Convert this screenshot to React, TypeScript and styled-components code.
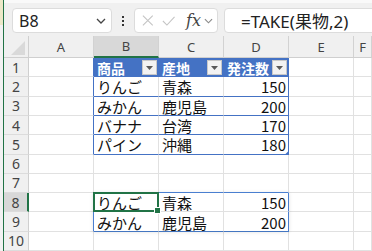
import styled, { createGlobalStyle } from "styled-components"

const GlobalStyle = createGlobalStyle`
    html, body {
        margin: 0;
        padding: 0;
        overflow: hidden;
        background: #ffffff;
    }
`

type Kind = "plain" | "th" | "num"

interface CellData {
    text: string
    kind: Kind
}

const COLS = ["A", "B", "C", "D", "E", "F"]
const ROWS = 10
const TABLE_BLUE = "#4472c4"
const SPILL_BLUE = "#4a7fd0"
const GRID = "#e1e1e1"

const data: Record<string, CellData> = {
    B1: { text: "商品", kind: "th" },
    C1: { text: "産地", kind: "th" },
    D1: { text: "発注数", kind: "th" },
    B2: { text: "りんご", kind: "plain" },
    C2: { text: "青森", kind: "plain" },
    D2: { text: "150", kind: "num" },
    B3: { text: "みかん", kind: "plain" },
    C3: { text: "鹿児島", kind: "plain" },
    D3: { text: "200", kind: "num" },
    B4: { text: "バナナ", kind: "plain" },
    C4: { text: "台湾", kind: "plain" },
    D4: { text: "170", kind: "num" },
    B5: { text: "パイン", kind: "plain" },
    C5: { text: "沖縄", kind: "plain" },
    D5: { text: "180", kind: "num" },
    B8: { text: "りんご", kind: "plain" },
    C8: { text: "青森", kind: "plain" },
    D8: { text: "150", kind: "num" },
    B9: { text: "みかん", kind: "plain" },
    C9: { text: "鹿児島", kind: "plain" },
    D9: { text: "200", kind: "num" },
}

const inTable = (c: number, r: number) => c >= 1 && c <= 3 && r >= 1 && r <= 5

// border colours for the right and bottom edge of a cell
const edges = (c: number, r: number) => {
    let right = GRID
    let bottom = GRID
    if (inTable(c, r)) bottom = TABLE_BLUE
    if (r === 1 && inTable(c, r)) right = TABLE_BLUE
    if ((c === 0 || c === 3) && r >= 1 && r <= 5) right = TABLE_BLUE
    if (c >= 1 && c <= 3 && (r === 7 || r === 9)) bottom = SPILL_BLUE
    if ((c === 0 || c === 3) && (r === 8 || r === 9)) right = SPILL_BLUE
    return { right, bottom }
}

const XIcon = () => (
    <svg width="13" height="13" viewBox="0 0 13 13">
        <path d="M1 1 L12 12 M12 1 L1 12" stroke="#c4c4c4" strokeWidth="1.2" fill="none" />
    </svg>
)

const CheckIcon = () => (
    <svg width="15" height="12" viewBox="0 0 15 12">
        <path d="M1 6 L5.5 10.5 L14 1.5" stroke="#c4c4c4" strokeWidth="1.2" fill="none" />
    </svg>
)

const Chevron = ({ color }: { color: string }) => (
    <svg width="10" height="6" viewBox="0 0 10 6">
        <path d="M1 1 L5 5 L9 1" stroke={color} strokeWidth="1.3" fill="none" />
    </svg>
)

const FilterButton = () => (
    <Filter>
        <svg width="7" height="4" viewBox="0 0 7 4">
            <path d="M0 0 L7 0 L3.5 4 Z" fill="#595959" />
        </svg>
    </Filter>
)

const App = () => {
    const cells = []
    cells.push(<Corner key="corner"><CornerTriangle /></Corner>)
    COLS.forEach((col, i) => {
        cells.push(
            <ColHeader key={`h${col}`} $selected={i === 1}>
                {col}
            </ColHeader>
        )
    })
    for (let r = 1; r <= ROWS; r++) {
        cells.push(
            <RowHeader key={`r${r}`} $selected={r === 8}>
                {r}
            </RowHeader>
        )
        COLS.forEach((col, c) => {
            const cell = data[`${col}${r}`]
            const { right, bottom } = edges(c, r)
            const active = c === 1 && r === 8
            cells.push(
                <Cell
                    key={`${col}${r}`}
                    $right={right}
                    $bottom={bottom}
                    $kind={cell ? cell.kind : "plain"}
                >
                    {cell && <CellText>{cell.text}</CellText>}
                    {cell && cell.kind === "th" && <FilterButton />}
                    {c === 3 && r === 5 && <ResizeHandle />}
                    {active && <SpillShadow />}
                    {active && (
                        <Selection>
                            <FillHandle />
                        </Selection>
                    )}
                </Cell>
            )
        })
    }

    return (
        <>
            <GlobalStyle />
            <Window>
                <EdgeStrip />
                <Main>
                    <FormulaBar>
                        <NameBox>
                            <span>B8</span>
                            <Chevron color="#444" />
                        </NameBox>
                        <Kebab>
                            <Dot />
                            <Dot />
                            <Dot />
                        </Kebab>
                        <ActionBox>
                            <XIcon />
                            <CheckIcon />
                            <Fx>fx</Fx>
                            <Chevron color="#8a8a8a" />
                        </ActionBox>
                        <FormulaInput>=TAKE(果物,2)</FormulaInput>
                    </FormulaBar>
                    <Sheet>{cells}</Sheet>
                </Main>
            </Window>
        </>
    )
}

export default App

const Window = styled.div`
    display: flex;
    width: 372px;
    height: 251px;
    overflow: hidden;
    font-family: "Noto Sans", "Noto Sans CJK JP", sans-serif;
`

const EdgeStrip = styled.div`
    width: 3px;
    flex-shrink: 0;
    background: linear-gradient(#ece8c8 0, #ece8c8 25px, #f2f2f2 25px);
    border-right: 1px solid #217346;
`

const Main = styled.div`
    flex: 1;
    display: flex;
    flex-direction: column;
    min-width: 0;
`

const FormulaBar = styled.div`
    height: 38px;
    box-sizing: border-box;
    display: flex;
    align-items: flex-start;
    padding: 5px 0 0 8px;
    background: #f0f0f0;
    border-top: 3px solid #f9f9f9;
`

const Box = styled.div`
    height: 25px;
    box-sizing: border-box;
    background: #ffffff;
    border: 1px solid #dcdcdc;
    border-radius: 4px;
    display: flex;
    align-items: center;
`

const NameBox = styled(Box)`
    width: 100px;
    padding: 0 5px 0 6px;
    justify-content: space-between;
    font-size: 16px;
    color: #222;
`

const Kebab = styled.div`
    width: 22px;
    height: 25px;
    display: flex;
    flex-direction: column;
    align-items: center;
    justify-content: center;
    gap: 2px;
`

const Dot = styled.span`
    width: 2px;
    height: 2px;
    background: #333;
`

const ActionBox = styled(Box)`
    width: 84px;
    padding: 0 4px 0 7px;
    gap: 8px;
`

const Fx = styled.span`
    font-family: "DejaVu Serif", "Liberation Serif", serif;
    font-style: italic;
    font-size: 16px;
    color: #444;
    margin-left: 3px;
    margin-right: -5px;
`

const FormulaInput = styled(Box)`
    flex: 1;
    margin: 0 -6px 0 6px;
    padding-left: 16px;
    font-size: 17px;
    color: #222;
    white-space: nowrap;
`

const Sheet = styled.div`
    flex: 1;
    display: grid;
    grid-template-columns: 25px repeat(5, 65px) 1fr;
    grid-template-rows: 22px;
    grid-auto-rows: 19.3px;
    background: #ffffff;
`

const Corner = styled.div`
    position: relative;
    background: #f0f0f0;
    border-right: 1px solid #cfcfcf;
    border-bottom: 1px solid #cfcfcf;
    box-sizing: border-box;
`

const CornerTriangle = styled.div`
    position: absolute;
    right: 3px;
    bottom: 2px;
    width: 14px;
    height: 14px;
    background: #d9d9d9;
    clip-path: polygon(100% 0, 100% 100%, 0 100%);
`

const ColHeader = styled.div<{ $selected: boolean }>`
    box-sizing: border-box;
    display: flex;
    align-items: center;
    justify-content: center;
    font-size: 13px;
    color: #444;
    background: ${(p) => (p.$selected ? "#d8d8d8" : "#f0f0f0")};
    border-right: 1px solid #d2d2d2;
    border-bottom: ${(p) => (p.$selected ? "2px solid #217346" : "1px solid #cfcfcf")};
`

const RowHeader = styled.div<{ $selected: boolean }>`
    box-sizing: border-box;
    display: flex;
    align-items: center;
    justify-content: center;
    font-size: 14px;
    color: #444;
    background: ${(p) => (p.$selected ? "#d8d8d8" : "#f0f0f0")};
    border-right: ${(p) => (p.$selected ? "2px solid #217346" : "1px solid #cfcfcf")};
    border-bottom: 1px solid #dcdcdc;
`

const Cell = styled.div<{ $right: string; $bottom: string; $kind: Kind }>`
    position: relative;
    box-sizing: border-box;
    display: flex;
    align-items: center;
    justify-content: ${(p) => (p.$kind === "num" ? "flex-end" : "space-between")};
    padding: 1px 2px 0 3px;
    font-family: "Noto Sans CJK JP", sans-serif;
    font-size: ${(p) => (p.$kind === "th" ? "14px" : "15px")};
    font-weight: ${(p) => (p.$kind === "th" ? 700 : 400)};
    color: ${(p) => (p.$kind === "th" ? "#ffffff" : "#111111")};
    background: ${(p) => (p.$kind === "th" ? TABLE_BLUE : "#ffffff")};
    border-right: 1px solid ${(p) => p.$right};
    border-bottom: 1px solid ${(p) => p.$bottom};
    white-space: nowrap;
`

const CellText = styled.span`
    line-height: 1;
`

const Filter = styled.span`
    width: 15px;
    height: 15px;
    flex-shrink: 0;
    box-sizing: border-box;
    display: flex;
    align-items: center;
    justify-content: center;
    background: #f2f2f2;
    border: 1px solid #c8c8c8;
    margin-right: -1px;
`

const ResizeHandle = styled.span`
    position: absolute;
    right: -1px;
    bottom: -1px;
    width: 4px;
    height: 4px;
    background: ${TABLE_BLUE};
    clip-path: polygon(100% 0, 100% 100%, 0 100%);
`

const Selection = styled.div`
    position: absolute;
    left: -1px;
    top: -1px;
    right: -1px;
    bottom: -1px;
    border: 2px solid #217346;
    z-index: 2;
`

const FillHandle = styled.span`
    position: absolute;
    right: -4px;
    bottom: -4px;
    width: 5px;
    height: 5px;
    background: #217346;
    border: 1px solid #ffffff;
`

const SpillShadow = styled.div`
    position: absolute;
    left: -1px;
    top: -1px;
    width: 196px;
    height: 39px;
    box-shadow: 0 1px 4px rgba(0, 0, 0, 0.12);
    pointer-events: none;
    z-index: 1;
`
